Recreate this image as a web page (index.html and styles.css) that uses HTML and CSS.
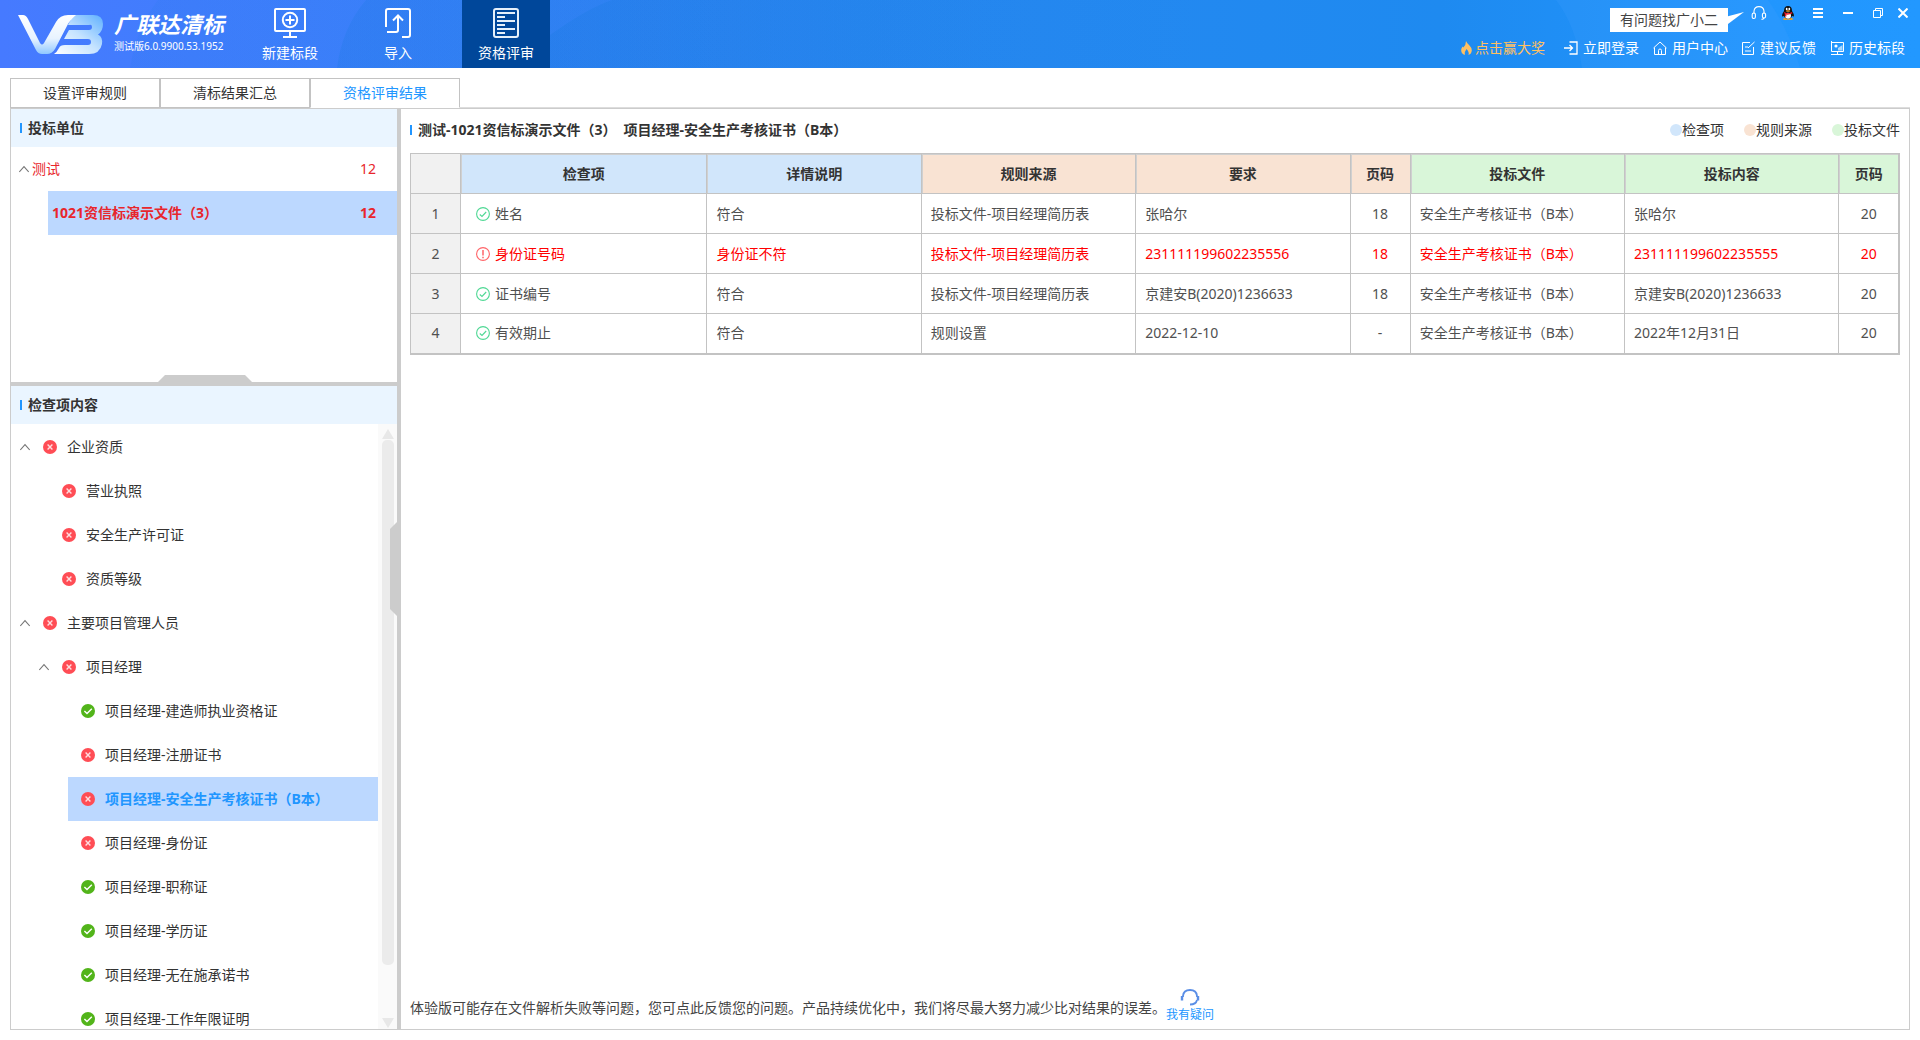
FILE: index.html
```html
<!DOCTYPE html>
<html lang="zh-CN">
<head>
<meta charset="utf-8">
<title>广联达清标</title>
<link rel="stylesheet" href="styles.css">
</head>
<body>
<svg class="defs" aria-hidden="true">
  <symbol id="fail" viewBox="0 0 14 14"><circle cx="7" cy="7" r="7" fill="#ff4d55"/><path d="M4.6 4.6l4.8 4.8M9.4 4.6l-4.8 4.8" stroke="#ffdcde" stroke-width="1.4" fill="none"/></symbol>
  <symbol id="pass" viewBox="0 0 14 14"><circle cx="7" cy="7" r="7" fill="#52b41a"/><path d="M3.4 7l2.6 2.6 4.8-4.9" stroke="#fff" stroke-width="1.4" fill="none"/></symbol>
  <symbol id="up" viewBox="0 0 10 8"><path d="M.3 7L5 1.6 9.700 7" stroke="#777" stroke-width="1.1" fill="none"/></symbol>
  <symbol id="ok" viewBox="0 0 14 14"><circle cx="7" cy="7" r="6.400" stroke="#4fd894" stroke-width="1.1" fill="none"/><path d="M3.800 7.500l2.200 2 4.200-4.500" stroke="#4fd894" stroke-width="1.100" fill="none"/></symbol>
  <symbol id="warn" viewBox="0 0 14 14"><circle cx="7" cy="7" r="6.400" stroke="#ff6468" stroke-width="1.100" fill="none"/><path d="M7 3v5.500M7 9.700v1.500" stroke="#ff6468" stroke-width="1.500" fill="none"/></symbol>
</svg>

<header class="header">
  <svg class="header-bg" viewBox="0 0 1920 68" preserveAspectRatio="none" aria-hidden="true">
    <defs>
      <linearGradient id="fade"><stop offset="0" stop-color="#1478dc"/><stop offset="1" stop-color="#1478dc" stop-opacity="0"/></linearGradient>
    </defs>
    <path d="M130 68Q136 28 158 0H800V68z" fill="url(#fade)" opacity=".1"/>
    <path d="M337 68Q342 28 366 0H1000V68z" fill="url(#fade)" opacity=".22"/>
    <path d="M550 35Q588 8 612 0H1200V68H550z" fill="url(#fade)" opacity=".25"/>
    <path d="M1556 0Q1576 26 1582 68H1800Q1788 28 1768 0z" fill="#46a0ff" opacity=".2"/>
  </svg>
  <div class="brand">
    <svg class="logo" viewBox="0 0 86 40" aria-hidden="true">
      <defs>
        <linearGradient id="lg1" x1="0" y1="0" x2="0" y2="1"><stop offset="0" stop-color="#fff"/><stop offset=".6" stop-color="#e8f3ff"/><stop offset="1" stop-color="#90c8ff"/></linearGradient>
        <linearGradient id="lg2" x1="1" y1="0" x2="0" y2="1"><stop offset="0" stop-color="#5eb0ff"/><stop offset=".5" stop-color="#c5e3ff"/><stop offset="1" stop-color="#fff"/></linearGradient>
      </defs>
      <path d="M0 0H5Q8 0 10 4L22 28Q24 31 26 28L38 7Q42 0 50 0H60L56 4Q52 5 50 9L37 34Q34 39 29 39H24Q20 39 18 35z" fill="url(#lg1)"/>
      <path d="M50 0H75Q85 0 85 9Q85 16 80 19.500Q85 22 84 29Q82 39 71 39H36Q39 37 41 33Q42 30 47 30H70Q73 30 73 27T70 24H46L51 15H71Q74 15 74 12T71 10H50Q52 5 58 0z" fill="url(#lg2)"/>
    </svg>
    <div class="brand-text">
      <strong class="brand-name">广联达清标</strong>
      <span class="version">测试版6.0.9900.53.1952</span>
    </div>
  </div>
  <nav class="menu">
    <button class="menu-item" type="button">
      <svg width="32" height="30" viewBox="0 0 32 30" fill="none" stroke="#fff" stroke-width="2"><rect x="1" y="1" width="30" height="22" rx="1"/><circle cx="16" cy="12" r="7.200"/><path d="M16 7.500v9M11.500 12h9M16 23v6M9 29h14"/></svg>
      <span>新建标段</span>
    </button>
    <button class="menu-item" type="button">
      <svg width="26" height="30" viewBox="0 0 26 30" fill="none" stroke="#fff" stroke-width="2"><path d="M1 19V3Q1 1 3 1H23Q25 1 25 3V27Q25 29 23 29H17M2 24H11Q13 24 13 22V8M8 12.500L13 7.500L18 12.500"/></svg>
      <span>导入</span>
    </button>
    <button class="menu-item active" type="button">
      <svg width="26" height="30" viewBox="0 0 26 30" fill="none" stroke="#e6f0fa" stroke-width="2"><rect x="1" y="1" width="24" height="28" rx="2"/><path d="M4 5h18M4 9h8M4 13h18M4 17h8M4 21h18M4 25h8"/></svg>
      <span>资格评审</span>
    </button>
  </nav>
  <div class="header-side">
    <div class="window-bar">
      <span class="bubble">有问题找广小二</span>
      <button class="wbtn service" type="button" aria-label="客服"><svg width="16" height="14" viewBox="0 0 16 14" fill="none" stroke="#fff" stroke-width="1.100"><path d="M3 7.500V5Q3.500 .6 8 .6T13 5V7.500"/><rect x="1.200" y="7" width="3.200" height="5.500" rx="1.600"/><rect x="11.400" y="7" width="3.200" height="5" rx="1.600"/><path d="M13 12Q12.500 13.400 10.500 13.400"/></svg></button>
      <button class="wbtn" type="button" aria-label="QQ"><svg width="14" height="14" viewBox="0 0 14 14"><ellipse cx="4.600" cy="13" rx="2.600" ry="1" fill="#f5a623"/><ellipse cx="9.400" cy="13" rx="2.600" ry="1" fill="#f5a623"/><path d="M7 0Q3 0 3 5Q.8 8 1 10.500L3 10Q4 13 7 13T11 10L13 10.500Q13.200 8 11 5Q11 0 7 0z" fill="#111"/><ellipse cx="7" cy="9.700" rx="3" ry="3" fill="#fff"/><ellipse cx="5.700" cy="2.900" rx=".9" ry="1.200" fill="#fff"/><ellipse cx="8.300" cy="2.900" rx=".9" ry="1.200" fill="#fff"/><ellipse cx="7" cy="5" rx="2.300" ry=".8" fill="#f5a623"/><path d="M2.800 6Q7 8.300 11.200 6V7.600Q8 9 5.400 8.600V10.500H3.800V8z" fill="#e8202a"/></svg></button>
      <button class="wbtn" type="button" aria-label="菜单"><svg width="10" height="10" viewBox="0 0 10 10" stroke="#fff" stroke-width="2"><path d="M0 1h10M0 5h10M0 9h10"/></svg></button>
      <button class="wbtn" type="button" aria-label="最小化"><svg width="10" height="10" viewBox="0 0 10 10" stroke="#fff" stroke-width="2"><path d="M0 5h10"/></svg></button>
      <button class="wbtn" type="button" aria-label="还原"><svg width="10" height="10" viewBox="0 0 10 10" stroke="#fff" fill="none"><path d="M.5 2.500h7v7h-7zM2.500 2.500v-2h7v7h-2"/></svg></button>
      <button class="wbtn close" type="button" aria-label="关闭"><svg width="10" height="10" viewBox="0 0 10 10" stroke="#fff" stroke-width="2"><path d="M.5 .5l9 9M9.500 .5l-9 9"/></svg></button>
    </div>
    <div class="links">
      <a class="link prize" href="#"><svg width="11" height="14" viewBox="0 0 11 14"><path d="M5 0Q6 2.500 8.500 4.600Q11 7 10.800 9.500Q10.500 13 7.500 14Q8.500 11 5.500 8Q3 11 3.800 14Q.3 12.600 .2 9.500Q.2 7.500 1.500 5.500L2.300 6.600Q5 4 5 0z" fill="#ffc062"/></svg><span>点击赢大奖</span></a>
      <a class="link" href="#"><svg width="14" height="14" viewBox="0 0 14 14" fill="none" stroke="#fff" stroke-width="1.300"><path d="M5.500 1H13V13H5.500M0 7H8.500M5.500 4L8.500 7L5.500 10"/></svg><span>立即登录</span></a>
      <a class="link" href="#"><svg width="14" height="14" viewBox="0 0 14 14" fill="none" stroke="#fff"><path d="M.5 7L7 1L13.500 7M1.500 6.500V13.500H12.500V6.500M5.500 13.500V9.500Q5.500 8 7 8T8.500 9.500V13.500"/></svg><span>用户中心</span></a>
      <a class="link" href="#"><svg width="13" height="14" viewBox="0 0 13 14" fill="none" stroke="#fff"><path d="M8 1.500H.5V13.500H11.500V6M3 10H9M3 6H6M6 7L12.500 1"/></svg><span>建议反馈</span></a>
      <a class="link" href="#"><svg width="14" height="14" viewBox="0 0 14 14" fill="none" stroke="#fff"><path d="M1.500 0V10.500H13.500V1.500H1.500M7.500 10.500V13.500M1 13.500H13"/><path d="M8 9.500V7L12.500 4V9.500z" fill="#a8d8ff" stroke="none"/><circle cx="6" cy="5" r="1.600" fill="#fff" stroke="none"/></svg><span>历史标段</span></a>
    </div>
  </div>
</header>

<nav class="tabs">
  <button class="tab" type="button">设置评审规则</button>
  <button class="tab" type="button">清标结果汇总</button>
  <button class="tab active" type="button">资格评审结果</button>
</nav>

<main class="workspace">
  <aside class="sidebar">
    <section class="bidders">
      <h2 class="panel-title">投标单位</h2>
      <ul class="bidder-list">
        <li class="bidder"><svg width="10" height="8"><use href="#up"/></svg><span>测试</span><span class="count">12</span></li>
        <li class="bidder selected"><span>1021资信标演示文件（3）</span><span class="count">12</span></li>
      </ul>
    </section>
    <div class="splitter-h"><i class="grip-h"></i></div>
    <section class="checks">
      <h2 class="panel-title">检查项内容</h2>
      <div class="checks-body">
        <ul class="tree">
          <li class="node parent"><svg width="10" height="8"><use href="#up"/></svg><svg class="dot" width="14" height="14"><use href="#fail"/></svg><span>企业资质</span></li>
          <li class="node l2"><svg class="dot" width="14" height="14"><use href="#fail"/></svg><span>营业执照</span></li>
          <li class="node l2"><svg class="dot" width="14" height="14"><use href="#fail"/></svg><span>安全生产许可证</span></li>
          <li class="node l2"><svg class="dot" width="14" height="14"><use href="#fail"/></svg><span>资质等级</span></li>
          <li class="node parent"><svg width="10" height="8"><use href="#up"/></svg><svg class="dot" width="14" height="14"><use href="#fail"/></svg><span>主要项目管理人员</span></li>
          <li class="node parent l2"><svg width="10" height="8"><use href="#up"/></svg><svg class="dot" width="14" height="14"><use href="#fail"/></svg><span>项目经理</span></li>
          <li class="node l3"><svg class="dot" width="14" height="14"><use href="#pass"/></svg><span>项目经理-建造师执业资格证</span></li>
          <li class="node l3"><svg class="dot" width="14" height="14"><use href="#fail"/></svg><span>项目经理-注册证书</span></li>
          <li class="node l3 selected"><svg class="dot" width="14" height="14"><use href="#fail"/></svg><span>项目经理-安全生产考核证书（B本）</span></li>
          <li class="node l3"><svg class="dot" width="14" height="14"><use href="#fail"/></svg><span>项目经理-身份证</span></li>
          <li class="node l3"><svg class="dot" width="14" height="14"><use href="#pass"/></svg><span>项目经理-职称证</span></li>
          <li class="node l3"><svg class="dot" width="14" height="14"><use href="#pass"/></svg><span>项目经理-学历证</span></li>
          <li class="node l3"><svg class="dot" width="14" height="14"><use href="#pass"/></svg><span>项目经理-无在施承诺书</span></li>
          <li class="node l3"><svg class="dot" width="14" height="14"><use href="#pass"/></svg><span>项目经理-工作年限证明</span></li>
        </ul>
        <div class="scrollbar"><i class="arrow-up"></i><div class="track"><i class="thumb"></i></div><i class="arrow-down"></i></div>
      </div>
    </section>
  </aside>
  <div class="splitter-v"><i class="grip-v"></i></div>
  <section class="detail">
    <div class="detail-head">
      <h2 class="panel-title plain">测试-1021资信标演示文件（3）&ensp;项目经理-安全生产考核证书（B本）</h2>
      <ul class="legend">
        <li class="key-check">检查项</li>
        <li class="key-rule">规则来源</li>
        <li class="key-bid">投标文件</li>
      </ul>
    </div>
    <table class="grid">
      <colgroup><col class="c-no"><col class="c-item"><col class="c-text"><col class="c-text"><col class="c-text"><col class="c-page"><col class="c-text"><col class="c-text"><col class="c-page"></colgroup>
      <thead>
        <tr><td class="no"></td><th class="check">检查项</th><th class="check">详情说明</th><th class="rule">规则来源</th><th class="rule">要求</th><th class="rule">页码</th><th class="bid">投标文件</th><th class="bid">投标内容</th><th class="bid">页码</th></tr>
      </thead>
      <tbody>
        <tr><td class="no">1</td><td><span class="item"><svg width="14" height="14"><use href="#ok"/></svg>姓名</span></td><td>符合</td><td>投标文件-项目经理简历表</td><td>张哈尔</td><td class="page">18</td><td>安全生产考核证书（B本）</td><td>张哈尔</td><td class="page">20</td></tr>
        <tr class="error"><td class="no">2</td><td><span class="item"><svg width="14" height="14"><use href="#warn"/></svg>身份证号码</span></td><td>身份证不符</td><td>投标文件-项目经理简历表</td><td>231111199602235556</td><td class="page">18</td><td>安全生产考核证书（B本）</td><td>231111199602235555</td><td class="page">20</td></tr>
        <tr><td class="no">3</td><td><span class="item"><svg width="14" height="14"><use href="#ok"/></svg>证书编号</span></td><td>符合</td><td>投标文件-项目经理简历表</td><td>京建安B(2020)1236633</td><td class="page">18</td><td>安全生产考核证书（B本）</td><td>京建安B(2020)1236633</td><td class="page">20</td></tr>
        <tr><td class="no">4</td><td><span class="item"><svg width="14" height="14"><use href="#ok"/></svg>有效期止</span></td><td>符合</td><td>规则设置</td><td>2022-12-10</td><td class="page">-</td><td>安全生产考核证书（B本）</td><td>2022年12月31日</td><td class="page">20</td></tr>
      </tbody>
    </table>
    <footer class="notice">
      <p>体验版可能存在文件解析失败等问题，您可点此反馈您的问题。产品持续优化中，我们将尽最大努力减少比对结果的误差。</p>
      <a class="ask" href="#">
        <svg width="20" height="17" viewBox="0 0 20 17" fill="none" stroke="#5a8ee6" stroke-width="1.800"><path d="M3 8V7Q3.500 1 10 1T17 7V8M17 11Q16 15.500 10 15.500"/><path d="M2 7V11.500M18 7V11.500" stroke-width="2.400"/></svg>
        <span>我有疑问</span>
      </a>
    </footer>
  </section>
</main>
</body>
</html>
```

FILE: styles.css
```css
* { box-sizing: border-box; }

body {
  margin: 0;
  height: 100vh;
  display: flex;
  flex-direction: column;
  background: #fff;
  color: #333;
  font: 14px/20px "Noto Sans", "Noto Sans CJK SC", sans-serif;
}

ul, h2, p { margin: 0; padding: 0; }
ul { list-style: none; }
svg { flex: none; display: block; }
button { font: inherit; color: inherit; background: none; border: 0; padding: 0; cursor: pointer; }
a { color: inherit; text-decoration: none; }
.defs { position: absolute; width: 0; height: 0; }

/* Header */
.header {
  position: relative;
  flex: none;
  display: flex;
  height: 68px;
  color: #fff;
  background: linear-gradient(90deg, #467aff 0%, #3c80fb 20%, #2887f0 45%, #1e8af0 75%, #2196fe 92%, #2298ff 100%);
}
.header-bg { position: absolute; inset: 0; width: 100%; height: 100%; }
.brand, .menu, .header-side { position: relative; display: flex; }
.brand { width: 246px; padding: 15px 0 0 18px; gap: 10px; }
.logo { width: 86px; height: 40px; }
.brand-text { display: flex; flex-direction: column; white-space: nowrap; }
.brand-name { font-size: 22px; line-height: 18px; font-style: italic; }
.version { margin-top: 5px; font-size: 10px; line-height: 16px; }

.menu { gap: 20px; }
.menu-item {
  width: 88px;
  height: 68px;
  padding-top: 8px;
  display: flex;
  flex-direction: column;
  align-items: center;
  gap: 5px;
}
.menu-item.active { background: #00479a; }

.header-side { margin-left: auto; flex-direction: column; align-items: flex-end; padding-right: 7px; }
.window-bar { display: flex; align-items: center; height: 38px; padding-bottom: 12px; }
.bubble {
  position: relative;
  align-self: flex-start;
  margin: 8px 22px 0 0;
  padding: 2px 10px;
  height: 24px;
  color: #444;
  background: #fff;
}
.bubble::after {
  content: "";
  position: absolute;
  left: 100%;
  top: 4px;
  width: 16px;
  height: 12px;
  background: #fff;
  clip-path: polygon(0 35%, 100% 0, 0 100%);
}
.wbtn { width: 30px; height: 26px; display: flex; align-items: center; justify-content: center; }
.wbtn.service { width: 18px; margin-right: 5px; }
.wbtn.close { width: 20px; }
.links { display: flex; gap: 14px; padding-right: 8px; }
.link { display: flex; align-items: center; gap: 5px; }
.link.prize { color: #ffc062; gap: 3px; margin-right: 5px; }

/* Tabs */
.tabs { flex: none; display: flex; padding: 10px 10px 0; height: 40px; background: linear-gradient(#ddd, #ddd) 10px 100% / calc(100% - 20px) 1px no-repeat; }
.tab { width: 150px; border: 1px solid #c3c3c3; background: #fff; }
.tab.active { color: #2196ff; border-bottom-color: #fff; }

/* Workspace */
.workspace { flex: 1; min-height: 0; display: flex; margin: 0 10px 10px; border: 1px solid #ccc; }
.sidebar { flex: none; width: 386px; display: flex; flex-direction: column; }
.panel-title {
  display: flex;
  align-items: center;
  gap: 6px;
  height: 38px;
  padding-left: 9px;
  font-size: 14px;
  line-height: 20px;
  background: #eaf5ff;
}
.panel-title::before { content: ""; width: 2px; height: 10px; background: #2196ff; }
.panel-title.plain { background: none; }

.bidders { flex: none; height: 273px; }
.bidder { display: flex; align-items: center; gap: 3px; height: 44px; padding: 0 21px 0 8px; color: #e8262c; }
.bidder.selected { margin-left: 37px; padding-left: 4px; background: #bcd8ff; font-weight: bold; }
.count { margin-left: auto; }

.splitter-h { position: relative; flex: none; height: 4px; background: #ccc; }
.grip-h { position: absolute; left: 147px; bottom: 100%; width: 94px; height: 7px; background: #ccc; clip-path: polygon(7px 0, 87px 0, 100% 100%, 0 100%); }
.splitter-v { position: relative; flex: none; width: 4px; background: #ccc; }
.grip-v { position: absolute; right: 100%; top: 413px; width: 7px; height: 94px; background: #ccc; clip-path: polygon(100% 0, 100% 100%, 0 87px, 0 7px); }

.checks { flex: 1; min-height: 0; display: flex; flex-direction: column; }
.checks .panel-title { flex: none; }
.checks-body { flex: 1; min-height: 0; display: flex; }
.tree { flex: 1; overflow: hidden; padding-top: 1px; }
.node { display: flex; align-items: center; height: 44px; padding-left: 32px; }
.node .dot { margin-right: 10px; }
.node.parent { padding-left: 9px; }
.node.parent .dot { margin-left: 13px; }
.node.l2 { margin-left: 19px; }
.node.l3 { margin-left: 57px; padding-left: 13px; }
.node.selected { background: #bcd8ff; color: #2196ff; font-weight: bold; }

.scrollbar { flex: none; width: 19px; padding: 5px 3px 1px 4px; display: flex; flex-direction: column; gap: 1px; background: #fafafa; }
.arrow-up, .arrow-down { height: 10px; background: #e8e8e8; clip-path: polygon(50% 0, 100% 100%, 0 100%); }
.arrow-down { clip-path: polygon(0 0, 100% 0, 50% 100%); }
.track { flex: 1; }
.thumb { display: block; height: 91%; border-radius: 5px; background: #ebebeb; }

/* Detail */
.detail { flex: 1; min-width: 0; display: flex; flex-direction: column; padding: 0 9px 6px; }
.detail-head { display: flex; justify-content: space-between; align-items: center; height: 42px; margin-bottom: 2px; }
.detail-head .panel-title { padding-left: 0; }
.legend { display: flex; gap: 20px; }
.legend li { display: flex; align-items: center; }
.legend li::before { content: ""; width: 12px; height: 12px; border-radius: 50%; }
.key-check::before { background: #d1e6fb; }
.key-rule::before { background: #f9e3d3; }
.key-bid::before { background: #d9f6d9; }

.grid { width: 100%; table-layout: fixed; border-collapse: collapse; border: 1px solid #c3c3c3; border-width: 1px 2px 2px 1px; color: #505050; }
.c-no { width: 50px; }
.c-item { width: 246px; }
.c-text { width: 214px; }
.c-page { width: 60px; }
.grid th, .grid td { height: 40px; padding: 0 9px; border: 1px solid #c3c3c3; text-align: left; white-space: nowrap; }
.grid th { color: #333; text-align: center; box-shadow: inset 1px 1px #d0d0d0; }
.check { background: #d1e6fb; }
.rule { background: #f9e3d3; }
.bid { background: #d9f6d9; }
.grid td.no { background: #f1f1f1; text-align: center; }
.grid td.page { text-align: center; }
.item { display: flex; align-items: center; gap: 5px; padding-left: 6px; }
.grid .error td:not(.no) { color: #f00; }

.notice { margin-top: auto; display: flex; align-items: center; color: #444; }
.notice p { padding-top: 4px; }
.ask { display: flex; flex-direction: column; align-items: center; gap: 1px; color: #2196ff; font-size: 12px; line-height: 16px; }
```
